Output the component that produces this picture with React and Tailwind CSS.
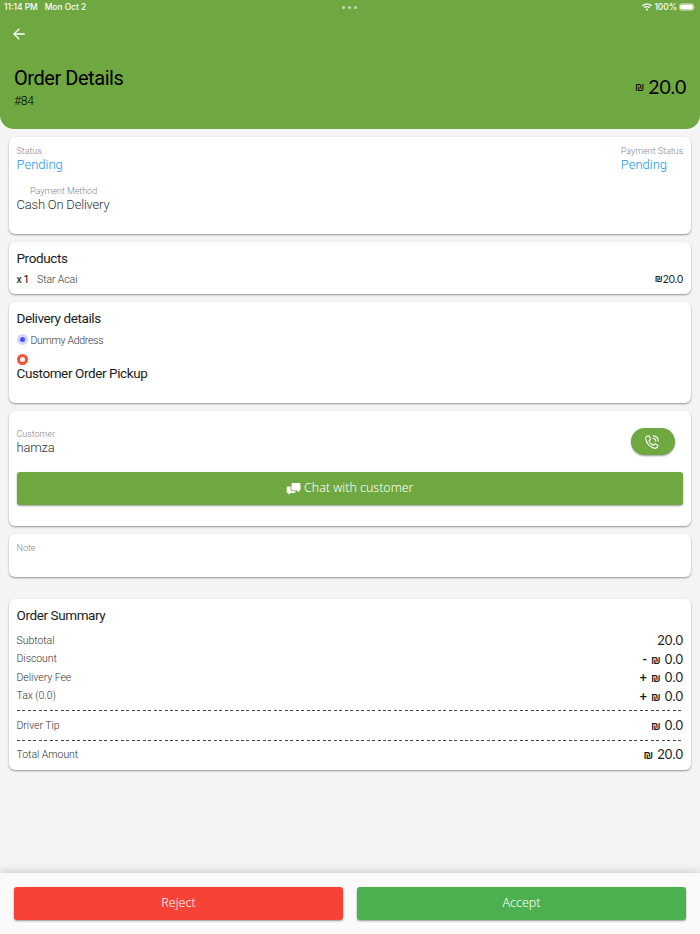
import { FaWifi } from "react-icons/fa";

const summary = [
  { label: "Subtotal", amount: "20.0" },
  { label: "Discount", sign: "-", currency: true, amount: "0.0" },
  { label: "Delivery Fee", sign: "+", currency: true, amount: "0.0" },
  { label: "Tax (0.0)", sign: "+", currency: true, amount: "0.0" },
];

function Card({ className, children }) {
  return (
    <section
      className={`mr-[9px] ml-[8.5px] rounded-md bg-white px-2 shadow-[0_1px_2px_rgba(0,0,0,0.4)] ${className}`}
    >
      {children}
    </section>
  );
}

function Heading({ children }) {
  return (
    <h2 className="text-[13.5px] leading-[17px] font-normal tracking-[-0.4px] text-[#1c1c1c]">
      {children}
    </h2>
  );
}

function Field({ label, value, labelClass = "", valueClass = "tracking-[-0.2px] text-[#333]" }) {
  return (
    <div>
      <p className={`pt-px text-[9px] leading-[14px] tracking-[-0.03px] text-[#85858f] ${labelClass}`}>{label}</p>
      <p className={`text-[13px] leading-[13px] ${valueClass}`}>{value}</p>
    </div>
  );
}

function Amount({ sign, currency, amount }) {
  return (
    <span className="flex items-center gap-[4px] font-['Lato'] text-[13px] font-normal text-[#1c1c1c]">
      {sign && <span className="font-bold">{sign}</span>}
      {currency && <span className="pt-px font-['Liberation_Sans'] text-[11px] font-bold">₪</span>}
      <span>{amount}</span>
    </span>
  );
}

function SummaryRow({ label, className, ...amount }) {
  return (
    <div className={`flex items-center justify-between ${className}`}>
      <span className="text-[10.5px] tracking-[-0.05px] text-[#333]">{label}</span>
      <Amount {...amount} />
    </div>
  );
}

function Dashes() {
  return (
    <div className="mr-[1px] h-px bg-[repeating-linear-gradient(90deg,#444_0,#444_3px,transparent_3px,transparent_5.463px)]" />
  );
}

function StatusBar() {
  return (
    <div className="grid h-[14px] grid-cols-3 items-center pr-[4px] pl-[4px] font-['Inter'] text-[8.4px] font-medium text-white">
      <div className="flex gap-[7px]">
        <span>11:14 PM</span>
        <span>Mon Oct 2</span>
      </div>
      <div className="flex justify-center gap-[3px]">
        <i className="size-[3px] rounded-full bg-white/60" />
        <i className="size-[3px] rounded-full bg-white/60" />
        <i className="size-[3px] rounded-full bg-white/60" />
      </div>
      <div className="flex items-center justify-end gap-[2px]">
        <FaWifi className="h-2 w-[10px]" />
        <span>100%</span>
        <svg width="17" height="8" viewBox="0 0 18 8">
          <rect x="0.5" y="0.5" width="15" height="7" rx="2" fill="none" stroke="white" strokeOpacity="0.5" />
          <rect x="1.3" y="1.3" width="13.4" height="5.4" rx="1.2" fill="white" />
          <path d="M16.5 2.8v2.4c.9-.3.9-2.1 0-2.4" fill="white" fillOpacity="0.5" />
        </svg>
      </div>
    </div>
  );
}

export default function App() {
  return (
    <div className="flex h-[934px] w-[700px] flex-col overflow-hidden bg-[#f4f4f4] font-['Roboto',sans-serif] font-light">
      <header className="h-[128.5px] shrink-0 rounded-b-[14px] bg-[#6fa840]">
        <StatusBar />
        <div className="pt-[14px] pl-[13px]">
          <svg width="12" height="12" viewBox="0 0 12 12" fill="none" stroke="white" strokeWidth="1.3">
            <path d="M11.8 6H1.2M6.3.7L1 6l5.3 5.3" />
          </svg>
        </div>
        <div className="flex items-center justify-between px-[14px] pt-[25px]">
          <div>
            <h1 className="text-[20px] leading-[26px] font-normal tracking-[-0.45px] text-black">Order Details</h1>
            <p className="text-[12px] leading-[21px] tracking-[-0.2px] text-black">#84</p>
          </div>
          <div className="flex items-center gap-[4px] pb-[3px] text-black">
            <span className="font-['Liberation_Sans'] text-[11px] font-normal">₪</span>
            <span className="font-['Lato'] text-[19.5px] font-normal tracking-[-0.2px]">20.0</span>
          </div>
        </div>
      </header>

      <main className="flex-1">
        <Card className="mt-[8.5px] h-[97px] pt-[6px]">
          <div className="flex justify-between">
            <Field label="Status" value="Pending" valueClass="text-[#1196ee]" />
            <Field label="Payment Status" value="Pending" valueClass="text-[#1196ee]" />
          </div>
          <div className="mt-[12px]">
            <Field label="Payment Method" labelClass="pl-[13.5px]" value="Cash On Delivery" />
          </div>
        </Card>

        <Card className="mt-2 h-[52px] pt-[8px]">
          <Heading>Products</Heading>
          <div className="mt-[5px] flex items-center text-[10.5px] leading-[15px] tracking-[-0.1px]">
            <span className="font-normal tracking-[-0.4px] text-black">x 1</span>
            <span className="ml-[8px] text-[#333]">Star Acai</span>
            <span className="ml-auto flex items-center font-['Lato'] font-normal text-[#1c1c1c]">
              <span className="font-['Liberation_Sans'] text-[9px] font-bold">₪</span>20.0
            </span>
          </div>
        </Card>

        <Card className="mt-2 h-[101px] pt-[8px]">
          <Heading>Delivery details</Heading>
          <div className="mt-[6px] flex items-center gap-[3px] text-[10.5px] leading-[14px] tracking-[-0.3px] text-[#333]">
            <i className="mb-[2px] flex size-[11px] items-center justify-center rounded-full bg-[#d5d5fb]">
              <i className="size-[5px] rounded-full bg-[#4c4cf5]" />
            </i>
            <span className="pt-px">Dummy Address</span>
          </div>
          <i className="mt-[6px] block size-[11px] rounded-full border-[3px] border-[#f9503c]" />
          <Heading>Customer Order Pickup</Heading>
        </Card>

        <Card className="mt-2 h-[115px] pt-[15px]">
          <div className="flex items-center justify-between">
            <div className="pb-[3px]">
              <Field label="Customer" value="hamza" />
            </div>
            <button className="mr-[8px] flex h-[27px] w-[44px] items-center justify-center rounded-full bg-[#6fa840] pr-[3px] text-white shadow-[0_1px_2px_rgba(0,0,0,0.4)]">
              <svg width="14" height="14" viewBox="0 0 14 14" fill="none" stroke="white" strokeWidth="1.1" strokeLinecap="round" strokeLinejoin="round">
                <path d="M3.2.8 1.5 1.5C.7 2 .5 3.2.8 4.4c1 4.3 4.3 7.600 8.3 8.7 1.4.4 2.4.1 2.9-.7l.7-1.5c.2-.4 0-.8-.4-1l-2.1-1c-.4-.2-.7-.1-1 .2l-1 1.100C6.2 9.400 4.6 7.700 4 5.800l1.1-1c.3-.3.3-.6.2-.9l-1-2.600C4.1.8 3.7.6 3.2.8Z" />
                <path d="M8 3.3c1.6.1 2.7 1.2 2.8 2.8M8.2.9c2.9.1 4.9 2.1 5 5" />
              </svg>
            </button>
          </div>
          <button className="mt-[15px] flex h-[33px] w-full items-center justify-center gap-[3px] rounded-[3px] bg-[#6fa840] font-['Noto_Sans'] text-[12.4px] text-white shadow-[0_1px_2px_rgba(0,0,0,0.4)]">
            <svg width="15" height="12" viewBox="0 0 14 12" fill="white">
              <path d="M6 0h7a1 1 0 0 1 1 1v5.5a1 1 0 0 1-1 1h-.5V9.5l-2-2H6a1 1 0 0 1-1-1V1a1 1 0 0 1 1-1Z" />
              <path d="M1.2 3.5h3v3.2c0 1 .6 1.6 1.6 1.6h3.2v.7a1 1 0 0 1-1 1H4l-2 2v-2h-.8a1 1 0 0 1-1-1V4.5a1 1 0 0 1 1-1Z" />
            </svg>
            <span>Chat with customer</span>
          </button>
        </Card>

        <Card className="mt-2 h-[43px] pt-[6.5px]">
          <p className="text-[9px] leading-[15px] text-[#85858f]">Note</p>
        </Card>

        <Card className="mt-[22px] h-[171px] pt-[7.5px]">
          <Heading>Order Summary</Heading>
          <div className="mt-[8px]">
            {summary.map((row) => (
              <SummaryRow key={row.label} className="h-[18.5px]" {...row} />
            ))}
          </div>
          <div className="mt-[4px]">
            <Dashes />
            <SummaryRow className="h-[29px] pt-[2px]" label="Driver Tip" currency amount="0.0" />
            <Dashes />
            <SummaryRow className="h-[28px]" label="Total Amount" currency amount="20.0" />
          </div>
        </Card>
      </main>

      <footer className="flex h-[61px] shrink-0 gap-[14px] bg-[#fafafa] px-[14px] pt-[14px] font-['Noto_Sans'] text-[12.5px] text-white shadow-[0_-2px_8px_rgba(0,0,0,0.15)]">
        <button className="h-[33px] flex-1 rounded-[3px] bg-[#f64336] shadow-[0_1px_2px_rgba(0,0,0,0.4)]">Reject</button>
        <button className="h-[33px] flex-1 rounded-[3px] bg-[#4caf50] shadow-[0_1px_2px_rgba(0,0,0,0.4)]">Accept</button>
      </footer>
    </div>
  );
}
